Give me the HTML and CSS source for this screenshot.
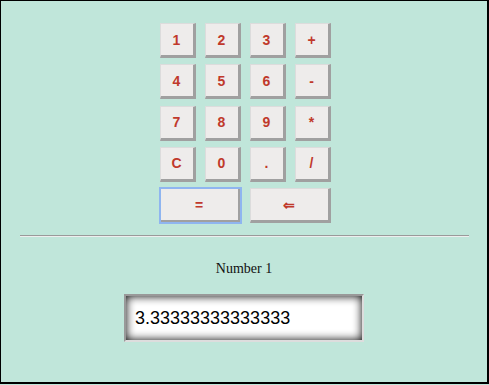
FILE: index.html
```html
<!DOCTYPE html>
<html lang="en">
<head>
    <meta charset="UTF-8">
    <meta name="viewport" content="width=device-width, initial-scale=1.0">
    <title>Calculator</title>
    <link rel="stylesheet" href="styles.css">
</head>
<body>
    <div class="calculator">
        <div class="keys">
            <button>1</button>
            <button>2</button>
            <button>3</button>
            <button>+</button>
            <button>4</button>
            <button>5</button>
            <button>6</button>
            <button>-</button>
            <button>7</button>
            <button>8</button>
            <button>9</button>
            <button>*</button>
            <button>C</button>
            <button>0</button>
            <button>.</button>
            <button>/</button>
            <button class="wide focused">=</button>
            <button class="wide">&#8656;</button>
        </div>
        <hr class="divider">
        <div class="display">
            <label for="number1">Number 1</label>
            <input type="text" id="number1" value="3.33333333333333">
        </div>
    </div>
</body>
</html>
```

FILE: styles.css
```css
body {
    margin: 0;
    background-color: #c0e6da;
}
.calculator {
    box-sizing: border-box;
    width: 489px;
    height: 384px;
    border: 1px solid #000;
    border-right-width: 2px;
    border-bottom-width: 2px;
    background-color: #c0e6da;
    padding-top: 22px;
}
.keys {
    display: grid;
    grid-template-columns: repeat(4, 36px);
    grid-auto-rows: 35px;
    column-gap: 9px;
    row-gap: 6.25px;
    justify-content: center;
    padding-left: 2px;
}
.keys button {
    box-sizing: border-box;
    margin: 0;
    padding: 0;
    background-color: #eeeceb;
    border-style: solid;
    border-width: 1px 3px 3px 1px;
    border-color: #dcdcdc #a0a0a0 #a0a0a0 #dcdcdc;
    color: #c0392b;
    font-family: "Liberation Sans", Arial, sans-serif;
    font-weight: bold;
    font-size: 14px;
    cursor: pointer;
}
.keys button.wide {
    grid-column: span 2;
}
.keys button.focused {
    outline: 2px solid #8fb5f0;
    outline-offset: -1px;
}
.divider {
    height: 0;
    margin: 12px 18px 0 19px;
    border: none;
    border-top: 1px solid #9a9a9a;
    border-bottom: 1px solid #eeeeee;
}
.display {
    display: flex;
    flex-direction: column;
    align-items: center;
}
.display label {
    margin-top: 24px;
    font-family: "Liberation Serif", "Times New Roman", serif;
    font-size: 14px;
    color: #111;
}
.display input {
    box-sizing: border-box;
    width: 240px;
    height: 48px;
    margin-top: 17px;
    padding: 0 9px;
    background-color: #fff;
    border: 2px solid;
    border-color: #999 #ddd #ddd #999;
    box-shadow: inset 0 0 10px #000;
    font-family: "Liberation Sans", Arial, sans-serif;
    font-size: 18px;
    color: #000;
}
```
